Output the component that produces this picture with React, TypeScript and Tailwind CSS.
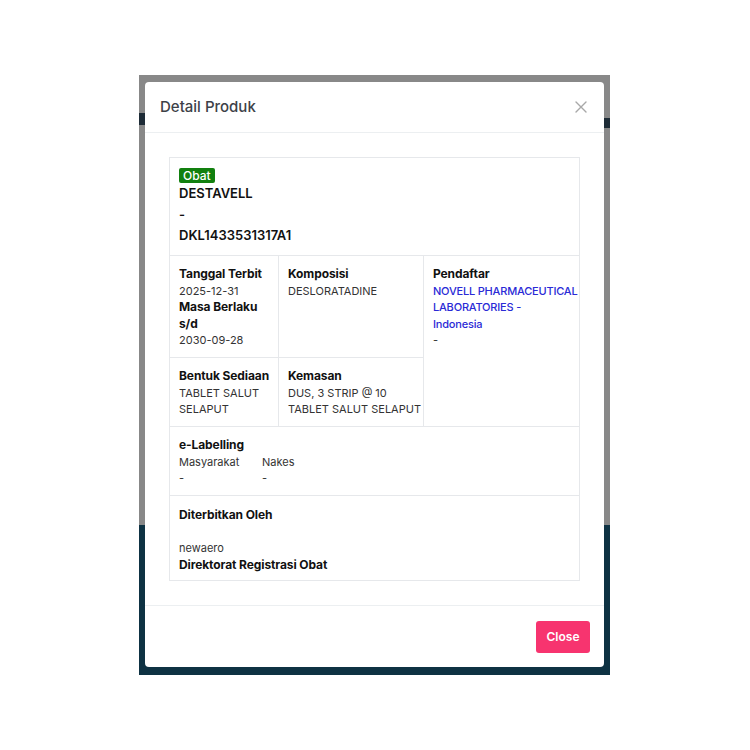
import React from 'react';

const font = { fontFamily: 'Inter, "Noto Sans", sans-serif' };

const Label: React.FC<{ children: React.ReactNode }> = ({ children }) => (
  <div className="text-[12px] font-bold text-[#111] leading-[16.5px] tracking-[-0.1px]">{children}</div>
);

const Value: React.FC<{ children: React.ReactNode; className?: string }> = ({ children, className }) => (
  <div className={`text-[11px] leading-[16.5px] ${className ?? 'text-[#333]'}`}>{children}</div>
);

const App: React.FC = () => {
  return (
    <div className="w-[750px] h-[750px] bg-white pt-[75px] pl-[139px]" style={font}>
      <div className="relative w-[471px] h-[600px]">
        {/* backdrop: dimmed page behind the modal */}
        <div className="h-[450px] bg-[#888888] flex justify-between pt-[38px]">
          <div className="w-[6px] h-[12px] bg-[#1d2b36]" />
          <div className="w-[6px] h-[10px] mt-[5px] bg-[#1d2b36]" />
        </div>
        <div className="h-[150px] bg-[#0e3243]" />

        <div className="absolute left-[6px] top-[7px] w-[459px] h-[585px] bg-white rounded-[4px] flex flex-col">
          <div className="h-[51px] flex items-center justify-between pl-[15px] pr-[17px] border-b border-[#eceff1]">
            <span className="text-[15px] font-medium text-[#3d4148]">Detail Produk</span>
            <svg width="12" height="12" viewBox="0 0 12 12" className="text-[#a8a8a8]">
              <path d="M1 1L11 11M11 1L1 11" stroke="currentColor" strokeWidth="1.4" strokeLinecap="round" />
            </svg>
          </div>

          <div className="p-[24px] border-b border-[#eceff1]">
            <div className="border border-[#e6e8eb] grid grid-cols-[109px_145px_156px]">
              <div className="col-span-3 h-[98px] border-b border-[#e6e8eb] px-[9px] pt-[10px]">
                <div className="flex h-[15px]">
                  <span className="bg-[#12800f] text-white text-[12px] font-medium leading-[15px] px-[4px] rounded-[2px]">
                    Obat
                  </span>
                </div>
                <div className="text-[13px] font-semibold text-[#111] leading-[21px]">
                  <div>DESTAVELL</div>
                  <div>-</div>
                  <div>DKL1433531317A1</div>
                </div>
              </div>

              <div className="h-[102px] border-r border-b border-[#e6e8eb] pl-[9px] pr-[2px] pt-[10px]">
                <Label>Tanggal Terbit</Label>
                <Value>2025-12-31</Value>
                <Label>Masa Berlaku s/d</Label>
                <Value>2030-09-28</Value>
              </div>
              <div className="h-[102px] border-r border-b border-[#e6e8eb] pl-[9px] pr-[2px] pt-[10px]">
                <Label>Komposisi</Label>
                <Value>DESLORATADINE</Value>
              </div>
              <div className="row-span-2 border-b border-[#e6e8eb] pl-[9px] pr-[2px] pt-[10px]">
                <Label>Pendaftar</Label>
                <Value className="text-[#2a2ad6] font-medium tracking-[-0.2px] whitespace-nowrap">
                  NOVELL PHARMACEUTICAL
                  <br />
                  LABORATORIES -
                  <br />
                  Indonesia
                </Value>
                <Value>-</Value>
              </div>

              <div className="h-[69px] border-r border-b border-[#e6e8eb] pl-[9px] pr-[2px] pt-[10px]">
                <Label>Bentuk Sediaan</Label>
                <Value>TABLET SALUT SELAPUT</Value>
              </div>
              <div className="h-[69px] border-r border-b border-[#e6e8eb] pl-[9px] pr-[2px] pt-[10px]">
                <Label>Kemasan</Label>
                <Value>DUS, 3 STRIP @ 10 TABLET SALUT SELAPUT</Value>
              </div>

              <div className="col-span-3 h-[69px] border-b border-[#e6e8eb] px-[9px] pt-[10px]">
                <Label>e-Labelling</Label>
                <div className="flex">
                  <div className="w-[83px]">
                    <Value>Masyarakat</Value>
                    <Value>-</Value>
                  </div>
                  <div>
                    <Value>Nakes</Value>
                    <Value>-</Value>
                  </div>
                </div>
              </div>

              <div className="col-span-3 h-[84px] px-[9px] pt-[11px]">
                <Label>Diterbitkan Oleh</Label>
                <Value>&nbsp;</Value>
                <Value>newaero</Value>
                <Label>Direktorat Registrasi Obat</Label>
              </div>
            </div>
          </div>

          <div className="flex-1 flex justify-end items-start pt-[15px] pr-[14px]">
            <button className="w-[54px] h-[32px] bg-[#f7346f] text-white text-[12px] font-semibold rounded-[3px]">
              Close
            </button>
          </div>
        </div>
      </div>
    </div>
  );
};

export default App;
